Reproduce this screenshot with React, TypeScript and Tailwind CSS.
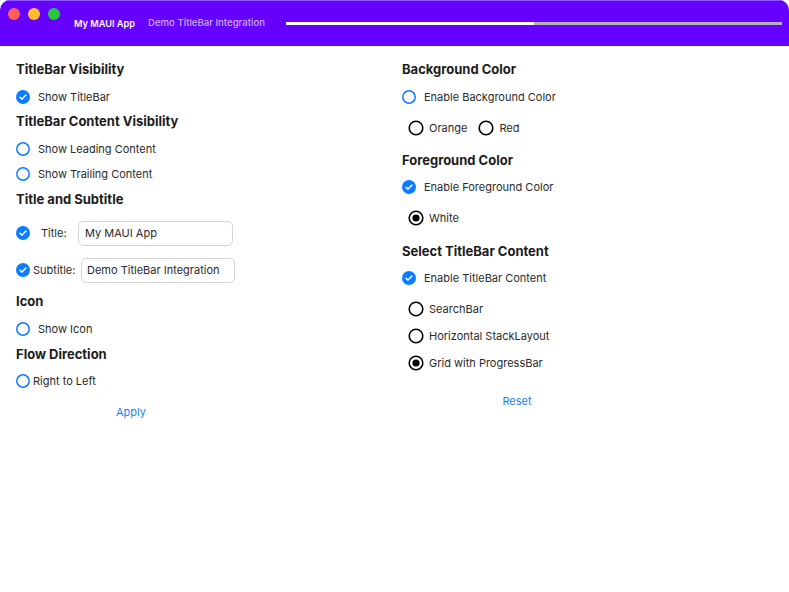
import type { ReactNode } from "react"

const font = { fontFamily: "Inter, 'Noto Sans', sans-serif" }

function Check({ on }: { on: boolean }) {
  return on ? (
    <svg width="14" height="14" viewBox="0 0 14 14" className="shrink-0">
      <circle cx="7" cy="7" r="7" fill="#0a7cff" />
      <path d="M4 7.2 6 9.1 10 5" fill="none" stroke="#fff" strokeWidth="1.5" strokeLinecap="round" strokeLinejoin="round" />
    </svg>
  ) : (
    <svg width="14" height="14" viewBox="0 0 14 14" className="shrink-0">
      <circle cx="7" cy="7" r="6.2" fill="#fff" stroke="#0a7cff" strokeWidth="1.5" />
    </svg>
  )
}

function Radio({ on }: { on?: boolean }) {
  return (
    <svg width="16" height="16" viewBox="0 0 16 16" className="shrink-0">
      <circle cx="8" cy="8" r="6.8" fill="#fff" stroke="#000" strokeWidth="1.6" />
      {on && <circle cx="8" cy="8" r="3.6" fill="#000" />}
    </svg>
  )
}

function Heading({ children, className = "" }: { children: ReactNode; className?: string }) {
  return (
    <div className={`flex h-[20px] items-center text-[13px] font-bold text-[#1c1c1c] ${className}`}>
      {children}
    </div>
  )
}

function CheckRow({ on, label, className = "" }: { on: boolean; label: string; className?: string }) {
  return (
    <div className={`flex h-[20px] items-center gap-[8px] text-[11px] text-[#2a2a2a] ${className}`}>
      <Check on={on} />
      <span>{label}</span>
    </div>
  )
}

function RadioItem({ on, label }: { on?: boolean; label: string }) {
  return (
    <div className="flex items-center gap-[5px] text-[11px] text-[#2a2a2a]">
      <Radio on={on} />
      <span>{label}</span>
    </div>
  )
}

export default function App() {
  return (
    <div className="h-[592px] w-[789px] bg-white" style={font}>
      <div className="flex h-full flex-col overflow-hidden rounded-[10px] bg-white">
        <header className="flex h-[46px] shrink-0 items-center border-t border-[#8c55ff] bg-[#6600ff]">
          <div className="flex gap-[8px] self-start pl-[8px] pt-[7px]">
            <span className="h-[12px] w-[12px] rounded-full bg-[#ff5f57]" />
            <span className="h-[12px] w-[12px] rounded-full bg-[#febc2e]" />
            <span className="h-[12px] w-[12px] rounded-full bg-[#28c840]" />
          </div>
          <span className="ml-[14px] text-[9.2px] font-semibold text-white">My MAUI App</span>
          <span className="ml-[13px] text-[9.6px] font-medium text-[#c9b0ff]">Demo TitleBar Integration</span>
          <div className="ml-[21px] mr-[7px] flex h-[3px] flex-1 bg-[#b4b4b8]">
            <div className="h-full w-[50%] bg-white" />
          </div>
        </header>

        <main className="flex pt-[14px]">
          <section className="flex w-[386px] flex-col pl-[16px]">
            <Heading>TitleBar Visibility</Heading>
            <CheckRow on label="Show TitleBar" className="mt-[7px]" />
            <Heading className="mt-[5px]">TitleBar Content Visibility</Heading>
            <CheckRow on={false} label="Show Leading Content" className="mt-[7px]" />
            <CheckRow on={false} label="Show Trailing Content" className="mt-[5px]" />
            <Heading className="mt-[6px]">Title and Subtitle</Heading>
            <div className="mt-[10px] flex h-[26px] items-center text-[11px] text-[#2a2a2a]">
              <Check on />
              <span className="ml-[11px] w-[37px]">Title:</span>
              <div className="flex h-[25px] w-[155px] items-center rounded-[5px] border border-[#d4d4d4] px-[6px]">
                My MAUI App
              </div>
            </div>
            <div className="mt-[11px] flex h-[26px] items-center text-[11px] text-[#2a2a2a]">
              <Check on />
              <span className="ml-[3px] w-[48px]">Subtitle:</span>
              <div className="flex h-[25px] w-[154px] items-center rounded-[5px] border border-[#d4d4d4] px-[5px]">
                Demo TitleBar Integration
              </div>
            </div>
            <Heading className="mt-[9px]">Icon</Heading>
            <CheckRow on={false} label="Show Icon" className="mt-[7px]" />
            <Heading className="mt-[6px]">Flow Direction</Heading>
            <div className="mt-[6px] flex h-[20px] items-center gap-[3px] text-[11px] text-[#2a2a2a]">
              <Check on={false} />
              <span>Right to Left</span>
            </div>
            <div className="mt-[11px] flex h-[20px] w-[230px] items-center justify-center text-[11px] text-[#1a7ffb]">
              Apply
            </div>
          </section>

          <section className="flex flex-1 flex-col pl-[16px]">
            <Heading>Background Color</Heading>
            <CheckRow on={false} label="Enable Background Color" className="mt-[7px]" />
            <div className="mt-[11px] flex h-[20px] items-center gap-[11px] pl-[6px]">
              <RadioItem label="Orange" />
              <RadioItem label="Red" />
            </div>
            <Heading className="mt-[13px]">Foreground Color</Heading>
            <CheckRow on label="Enable Foreground Color" className="mt-[6px]" />
            <div className="mt-[11px] flex h-[20px] items-center pl-[6px]">
              <RadioItem on label="White" />
            </div>
            <Heading className="mt-[14px]">Select TitleBar Content</Heading>
            <CheckRow on label="Enable TitleBar Content" className="mt-[6px]" />
            <div className="mt-[11px] flex h-[20px] items-center pl-[6px]">
              <RadioItem label="SearchBar" />
            </div>
            <div className="mt-[7px] flex h-[20px] items-center pl-[6px]">
              <RadioItem label="Horizontal StackLayout" />
            </div>
            <div className="mt-[7px] flex h-[20px] items-center pl-[6px]">
              <RadioItem on label="Grid with ProgressBar" />
            </div>
            <div className="mt-[18px] flex h-[20px] w-[230px] items-center justify-center text-[11px] text-[#1a7ffb]">
              Reset
            </div>
          </section>
        </main>
      </div>
    </div>
  )
}
